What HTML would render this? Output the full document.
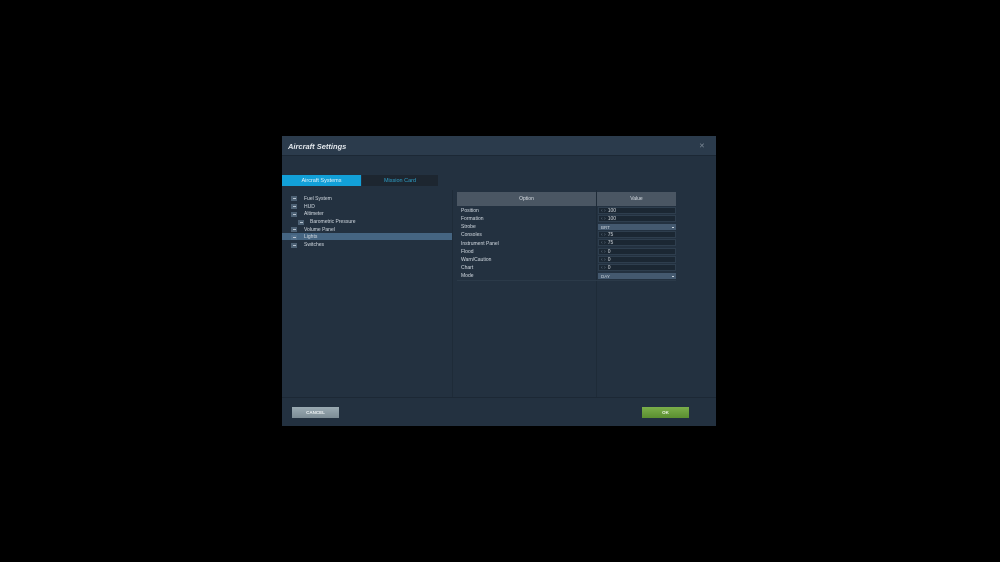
<!DOCTYPE html>
<html><head><meta charset="utf-8"><style>
*{margin:0;padding:0;box-sizing:border-box}
body{width:1000px;height:562px;background:#000;position:relative;overflow:hidden;font-family:"Liberation Sans","DejaVu Sans",sans-serif;color:#d6dde4}
.a{position:absolute}
.t{font-size:5px;white-space:nowrap;line-height:8px}
.ic{position:absolute;width:6px;height:5px;background:#4e6275}
.ic:after{content:"";position:absolute;left:1.5px;top:2px;width:3px;height:1px;background:#b8c4d0}
.v{position:absolute;left:598px;width:78px;height:7px;background:#1b2733;border:1px solid #2e3e4e;font-size:5px;line-height:6px;color:#d8dee4;padding-left:2px}
.v span{color:#6f7f8f;margin-right:2px}
.d{position:absolute;left:598px;width:78px;height:6px;background:#44596f;font-size:4.5px;line-height:7px;color:#c8d2dc;padding-left:3px}
.d:after{content:"";position:absolute;right:2px;top:3px;width:2px;height:1px;background:#c8d2dc}
</style></head><body>
<div class="a" style="left:282px;top:136px;width:434px;height:290px;background:#233140"></div>
<div class="a" style="left:282px;top:136px;width:434px;height:19px;background:#2b3b4c"></div>
<div class="a" style="left:282px;top:155px;width:434px;height:1px;background:#1c2835"></div>
<div class="a" style="left:288px;top:141px;font-size:7.5px;font-weight:bold;font-style:italic;color:#e4e9ee;line-height:11px">Aircraft Settings</div>
<div class="a" style="left:699px;top:141px;font-size:7px;color:#7d8a97;line-height:11px">✕</div>
<div class="a" style="left:282px;top:175px;width:79px;height:11px;background:#12a0d8;font-size:5.5px;line-height:12px;text-align:center;color:#e8f4fb">Aircraft Systems</div>
<div class="a" style="left:362px;top:175px;width:76px;height:11px;background:#1d2630;font-size:5.5px;line-height:12px;text-align:center;color:#2ea0c8">Mission Card</div>
<div class="a" style="left:452px;top:190px;width:1px;height:208px;background:#1e2b38"></div>
<div class="a" style="left:596px;top:190px;width:1px;height:208px;background:#1e2b38"></div>
<div class="a" style="left:282px;top:397px;width:434px;height:1px;background:#1c2835"></div>
<div class="a" style="left:282px;top:233px;width:170px;height:7px;background:#456582"></div>
<div class="ic" style="left:291px;top:196px"></div><div class="a t" style="left:304px;top:195px">Fuel System</div>
<div class="ic" style="left:291px;top:204px"></div><div class="a t" style="left:304px;top:203px">HUD</div>
<div class="ic" style="left:291px;top:212px"></div><div class="a t" style="left:304px;top:210px">Altimeter</div>
<div class="ic" style="left:298px;top:220px"></div><div class="a t" style="left:310px;top:218px">Barometric Pressure</div>
<div class="ic" style="left:291px;top:227px"></div><div class="a t" style="left:304px;top:226px">Volume Panel</div>
<div class="ic" style="left:291px;top:235px;background:#52708c"></div><div class="a t" style="left:304px;top:233px">Lights</div>
<div class="ic" style="left:291px;top:243px"></div><div class="a t" style="left:304px;top:241px">Switches</div>
<div class="a" style="left:457px;top:192px;width:139px;height:14px;background:#4a5663;font-size:5px;line-height:15px;text-align:center;color:#d8dee4">Option</div>
<div class="a" style="left:597px;top:192px;width:79px;height:14px;background:#4a5663;font-size:5px;line-height:15px;text-align:center;color:#d8dee4">Value</div>
<div class="a t" style="left:461px;top:207px">Position</div><div class="v" style="top:207px"><span>‹ ›</span>100</div>
<div class="a t" style="left:461px;top:215px">Formation</div><div class="v" style="top:215px"><span>‹ ›</span>100</div>
<div class="a t" style="left:461px;top:223px">Strobe</div><div class="d" style="top:224px">BRT</div>
<div class="a t" style="left:461px;top:231px">Consoles</div><div class="v" style="top:231px"><span>‹ ›</span>75</div>
<div class="a t" style="left:461px;top:240px">Instrument Panel</div><div class="v" style="top:239px"><span>‹ ›</span>75</div>
<div class="a t" style="left:461px;top:248px">Flood</div><div class="v" style="top:248px"><span>‹ ›</span>0</div>
<div class="a t" style="left:461px;top:256px">Warn/Caution</div><div class="v" style="top:256px"><span>‹ ›</span>0</div>
<div class="a t" style="left:461px;top:264px">Chart</div><div class="v" style="top:264px"><span>‹ ›</span>0</div>
<div class="a t" style="left:461px;top:272px">Mode</div><div class="d" style="top:273px">DAY</div>
<div class="a" style="left:457px;top:280px;width:219px;height:1px;background:#2b3a49"></div>
<div class="a" style="left:292px;top:407px;width:47px;height:11px;background:linear-gradient(#9aaab2,#7c8c95);font-size:4.5px;font-weight:bold;line-height:11px;text-align:center;color:#eef2f4">CANCEL</div>
<div class="a" style="left:642px;top:407px;width:47px;height:11px;background:linear-gradient(#7aae4a,#5a8e30);font-size:4.5px;font-weight:bold;line-height:11px;text-align:center;color:#eef6e6">OK</div>
</body></html>
